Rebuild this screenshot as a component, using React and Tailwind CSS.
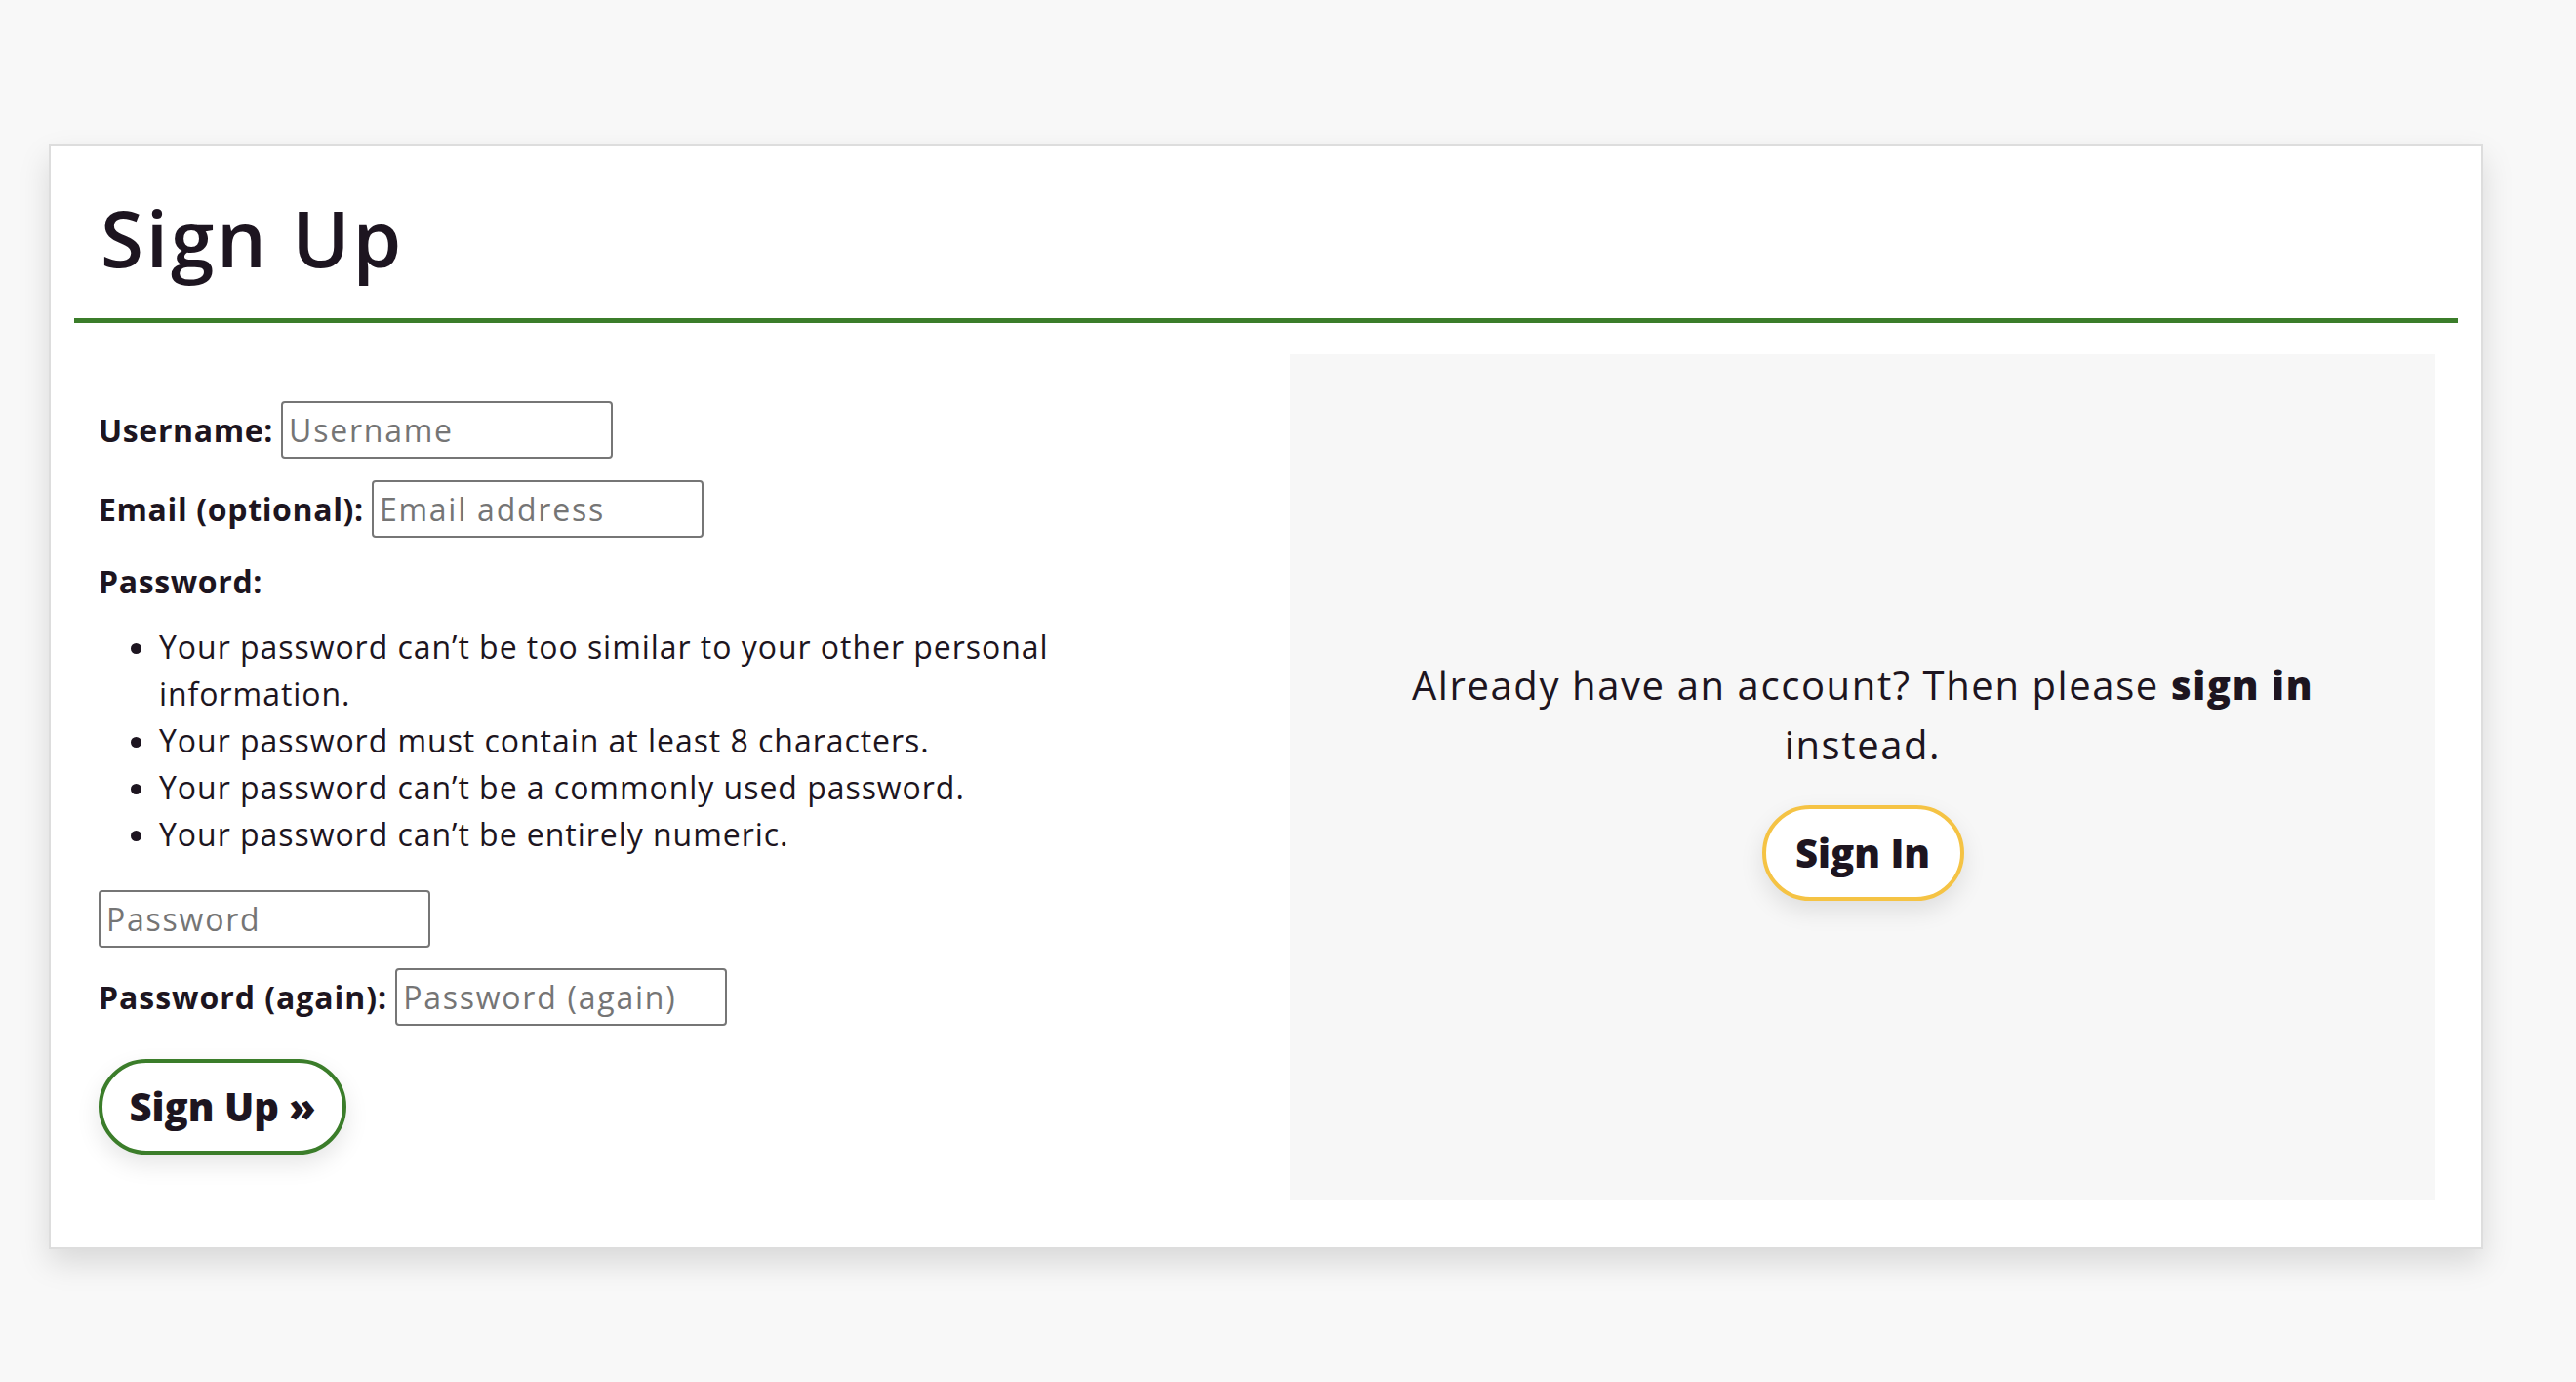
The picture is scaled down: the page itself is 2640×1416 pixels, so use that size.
export default function App() {
  return (
    <div className="min-h-screen bg-[#f8f8f8] pt-[148px] pl-[50px] font-['Open_Sans',sans-serif] tracking-[0.06em] text-[#1d1520]">
      <div className="flex h-[1132px] w-[2495px] flex-col border-2 border-[#dddddd] bg-white shadow-[0_14px_30px_rgba(0,0,0,0.13)]">
        {/* header */}
        <div className="mx-[24px] border-b-[5px] border-[#3b7d2a] pt-[45px] pb-[35px]">
          <h1 className="pl-[27px] text-[80px] leading-[96px] font-semibold tracking-[0.035em]">Sign Up</h1>
        </div>

        <div className="flex flex-1 pt-[32px] pb-[48px] pl-[49px] pr-[47px]">
          {/* sign up form */}
          <form className="flex-1 pt-[48px] text-[32px]" onSubmit={(e) => e.preventDefault()}>
            <div className="flex h-[59px] items-center gap-[8px]">
              <label htmlFor="username" className="font-bold tracking-[0.02em]">Username:</label>
              <input
                id="username"
                placeholder="Username"
                className="h-[59px] w-[340px] rounded-[4px] border-2 border-[#767676] px-[6px] tracking-[0.055em] outline-none placeholder:text-[#757575]"
              />
            </div>
            <div className="mt-[22px] flex h-[59px] items-center gap-[8px]">
              <label htmlFor="email" className="font-bold tracking-[0.02em]">Email (optional):</label>
              <input
                id="email"
                placeholder="Email address"
                className="h-[59px] w-[340px] rounded-[4px] border-2 border-[#767676] px-[6px] tracking-[0.055em] outline-none placeholder:text-[#757575]"
              />
            </div>

            <div className="mt-[21px] leading-[48px] font-bold tracking-[0.02em]">Password:</div>
            <ul className="mt-[19px] w-[1050px] list-disc pl-[62px] leading-[48px]">
              <li>Your password can’t be too similar to your other personal information.</li>
              <li>Your password must contain at least 8 characters.</li>
              <li>Your password can’t be a commonly used password.</li>
              <li>Your password can’t be entirely numeric.</li>
            </ul>

            <input
              type="password"
              placeholder="Password"
              className="mt-[33px] block h-[59px] w-[340px] rounded-[4px] border-2 border-[#767676] px-[6px] tracking-[0.055em] outline-none placeholder:text-[#757575]"
            />
            <div className="mt-[21px] flex h-[59px] items-center gap-[8px]">
              <label htmlFor="password2" className="font-bold tracking-[0.03em]">Password (again):</label>
              <input
                id="password2"
                type="password"
                placeholder="Password (again)"
                className="h-[59px] w-[340px] rounded-[4px] border-2 border-[#767676] px-[6px] tracking-[0.055em] outline-none placeholder:text-[#757575]"
              />
            </div>

            <button
              type="submit"
              className="mt-[34px] h-[98px] w-[254px] rounded-full border-4 border-[#3b7d2a] bg-white text-[40px] font-extrabold tracking-normal shadow-[0_10px_24px_rgba(0,0,0,0.1)]"
            >
              Sign Up »
            </button>
          </form>

          {/* sign in side */}
          <div className="flex w-[1174px] flex-col items-center justify-center bg-[#f7f7f7]">
            <p className="max-w-[980px] text-center text-[40px] leading-[61px] tracking-[0.04em]">
              Already have an account? Then please <b className="font-extrabold">sign in</b> instead.
            </p>
            <button className="mt-[32px] h-[98px] w-[207px] rounded-full border-4 border-[#f5c344] bg-white text-[40px] font-extrabold tracking-normal shadow-[0_10px_24px_rgba(0,0,0,0.1)]">
              Sign In
            </button>
          </div>
        </div>
      </div>
    </div>
  )
}
